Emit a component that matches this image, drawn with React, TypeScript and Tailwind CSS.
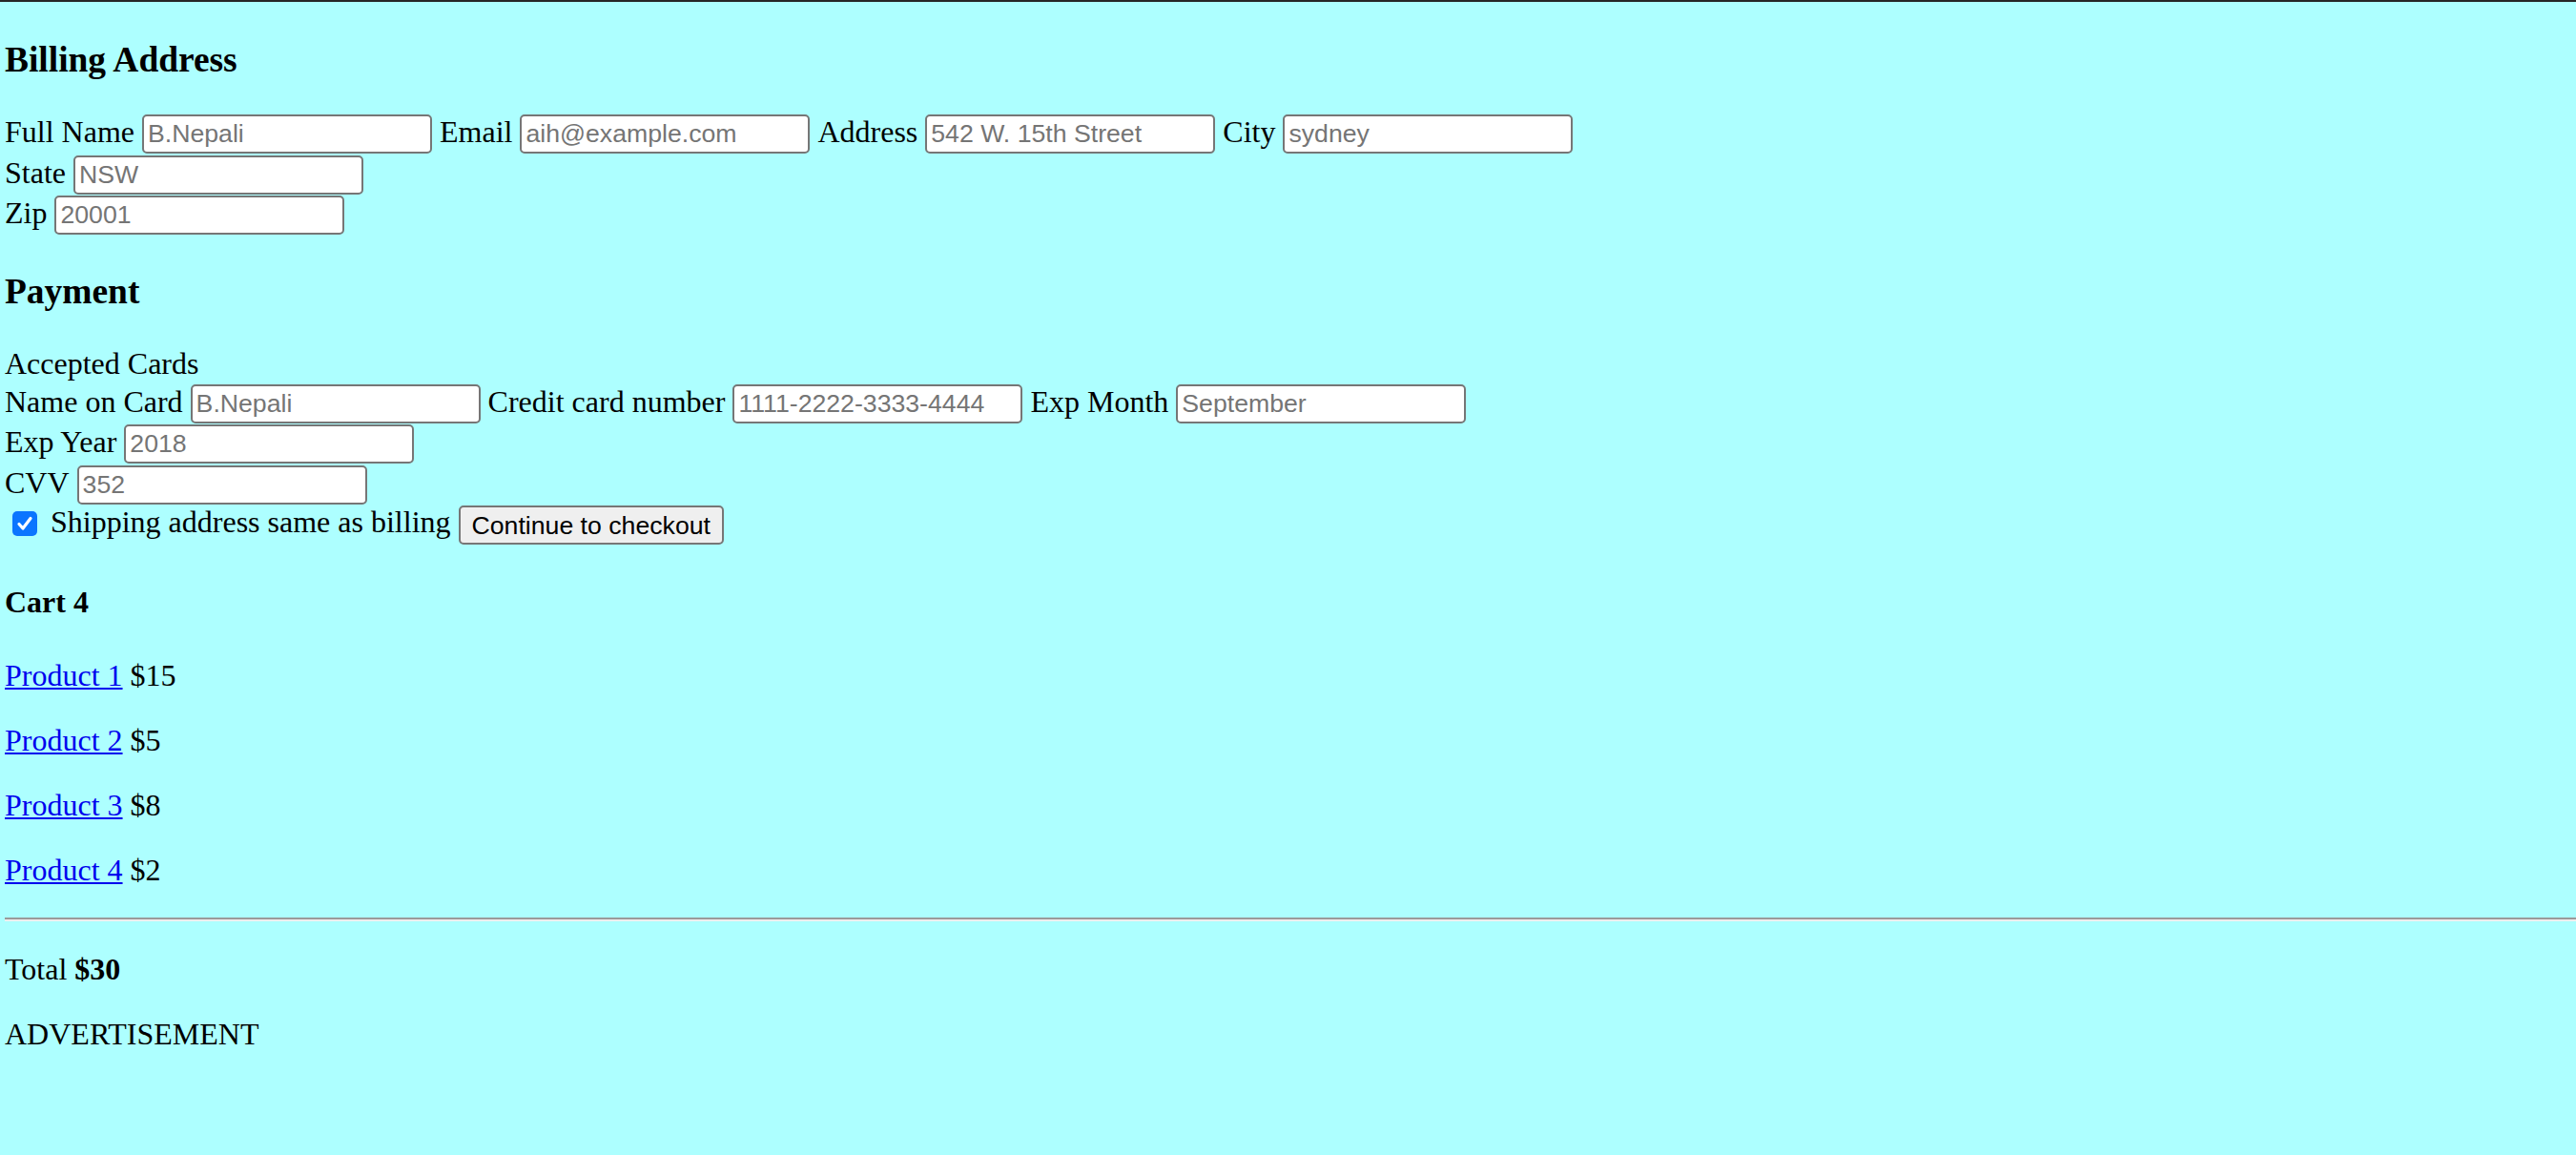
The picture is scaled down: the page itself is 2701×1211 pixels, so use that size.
import React from "react";

const inputCls =
  "w-[304px] h-[41px] self-start border-2 border-[#767676] rounded-[5px] bg-white px-[4px] text-[26.67px] font-['Liberation_Sans',Arial,sans-serif] text-black placeholder:text-[#757575] outline-none";

function Field({ label, placeholder }: { label: string; placeholder: string }) {
  return (
    <>
      <span>{label}</span>
      <input className={inputCls} placeholder={placeholder} />
    </>
  );
}

function Row({ children }: { children: React.ReactNode }) {
  return <div className="flex items-baseline gap-x-[8px] h-[42.5px] pt-[1.5px] whitespace-nowrap">{children}</div>;
}

const products = [
  { name: "Product 1", price: "$15" },
  { name: "Product 2", price: "$5" },
  { name: "Product 3", price: "$8" },
  { name: "Product 4", price: "$2" },
];

export default function App() {
  return (
    <div className="min-h-screen bg-[#adffff] border-t-2 border-[#262626] pl-[5px] font-['Liberation_Serif','Times_New_Roman',serif] text-[32px] leading-[36px] text-black">
      <h3 className="text-[37.44px] leading-[42.1px] font-bold mt-[40px] mb-[34.88px]">Billing Address</h3>
      <Row>
        <Field label="Full Name" placeholder="B.Nepali" />
        <Field label="Email" placeholder="aih@example.com" />
        <Field label="Address" placeholder="542 W. 15th Street" />
        <Field label="City" placeholder="sydney" />
      </Row>
      <Row>
        <Field label="State" placeholder="NSW" />
      </Row>
      <Row>
        <Field label="Zip" placeholder="20001" />
      </Row>

      <h3 className="text-[37.44px] leading-[42.1px] font-bold mt-[39px] mb-[35.88px]">Payment</h3>
      <div className="h-[38px]">Accepted Cards</div>
      <Row>
        <Field label="Name on Card" placeholder="B.Nepali" />
        <Field label="Credit card number" placeholder="1111-2222-3333-4444" />
        <Field label="Exp Month" placeholder="September" />
      </Row>
      <Row>
        <Field label="Exp Year" placeholder="2018" />
      </Row>
      <Row>
        <Field label="CVV" placeholder="352" />
      </Row>
      <div className="flex items-baseline h-[41.5px] whitespace-nowrap">
        <span className="self-start mt-[7px] ml-[8px] mr-[14px] w-[26px] h-[26px] rounded-[5px] bg-[#0b75ff] flex items-center justify-center">
          <svg width="18" height="18" viewBox="0 0 18 18" fill="none">
            <path d="M3 9.5 L7 14 L15 3.5" stroke="white" strokeWidth="3.2" strokeLinecap="round" strokeLinejoin="round" />
          </svg>
        </span>
        <span>Shipping address same as billing</span>
        <button className="ml-[8px] self-start mt-[1.5px] h-[40.5px] px-[12px] border-2 border-[#767676] rounded-[5px] bg-[#efefef] text-[26.67px] leading-[30px] font-['Liberation_Sans',Arial,sans-serif] text-black">
          Continue to checkout
        </button>
      </div>

      <h4 className="font-bold mt-[42.56px] mb-[41px]">Cart 4</h4>
      {products.map((p) => (
        <p key={p.name} className="my-[32px]">
          <a href="#" className="text-[#0000ee] underline decoration-[2px] underline-offset-[2px]">
            {p.name}
          </a>{" "}
          {p.price}
        </p>
      ))}
      <hr className="my-[32px] border-t-2 border-b-2 border-t-[#9a9a9a] border-b-[#eeeeee] border-x-0 h-0" />
      <p className="my-[32px]">
        Total <b>$30</b>
      </p>
      <p className="my-[32px]">ADVERTISEMENT</p>
    </div>
  );
}
